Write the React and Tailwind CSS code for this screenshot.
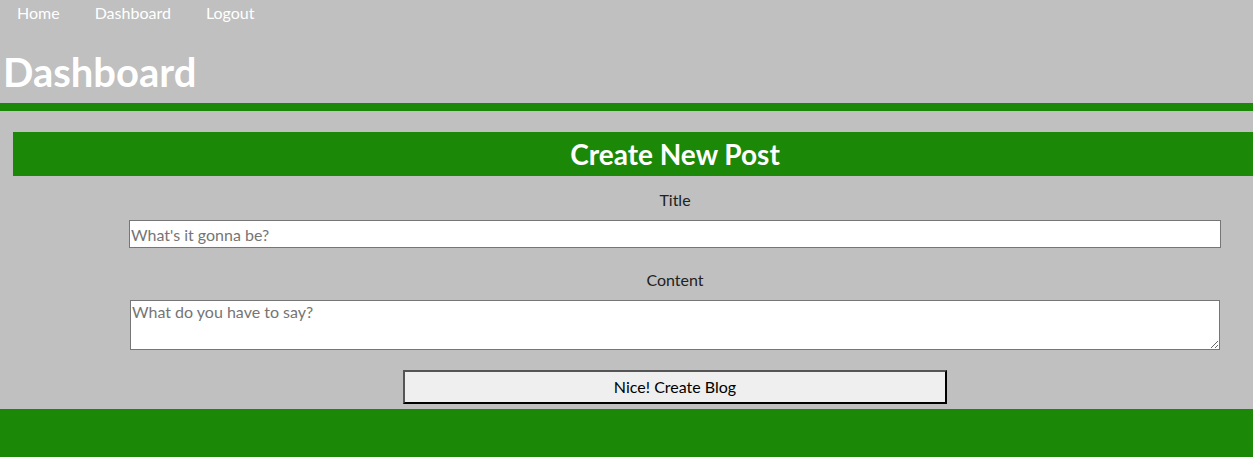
export default function App() {
  const font = { fontFamily: '"Lato", "Noto Sans", sans-serif' };
  return (
    <div className="w-[1253px] h-[457px] overflow-hidden bg-[#c0c0c0] flex flex-col" style={font}>
      <nav className="h-[26px] flex items-center pl-[17px] gap-[35px] text-[16px] text-white">
        <a>Home</a>
        <a>Dashboard</a>
        <a>Logout</a>
      </nav>
      <header className="h-[77px] flex items-center pl-[3px] pt-[14px]">
        <h1 className="text-[40px] font-bold text-white leading-none">Dashboard</h1>
      </header>
      <div className="h-[8px] bg-[#1c8808]" />
      <main className="ml-[13px] w-[1324px] shrink-0 mt-[21px] flex flex-col items-center">
        <div className="w-full h-[44px] bg-[#1c8808] flex items-center justify-center">
          <h2 className="text-[28px] font-bold text-white leading-none">Create New Post</h2>
        </div>
        <label className="mt-[13px] h-[22px] leading-[22px] text-[16px] text-[#222]">Title</label>
        <input
          className="mt-[9px] w-[1092px] h-[28px] bg-white border border-[#767676] px-[1px] text-[16px] placeholder:text-[#757575] outline-none"
          placeholder="What's it gonna be?"
        />
        <label className="mt-[21px] h-[22px] leading-[22px] text-[16px] text-[#222]">Content</label>
        <textarea
          className="mt-[9px] w-[1090px] h-[50px] bg-white border border-[#767676] px-[1px] text-[16px] leading-[22px] placeholder:text-[#757575] outline-none"
          placeholder="What do you have to say?"
        />
        <button className="mt-[20px] w-[544px] h-[34px] bg-[#efefef] border-2 border-t-[#555] border-l-[#555] border-b-black border-r-black text-[16px] text-black">
          Nice! Create Blog
        </button>
      </main>
      <footer className="mt-[5px] flex-1 bg-[#1c8808]" />
    </div>
  );
}
